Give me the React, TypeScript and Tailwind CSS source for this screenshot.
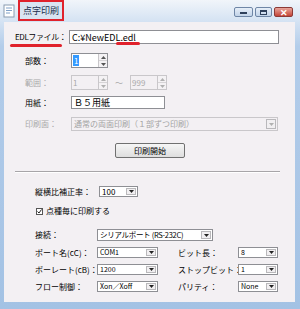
import React from 'react';

function Arrow({ up, color = '#000' }: { up?: boolean; color?: string }) {
  return (
    <svg width="5" height="3" viewBox="0 0 5 3">
      <polygon points={up ? '0,3 5,3 2.5,0' : '0,0 5,0 2.5,3'} fill={color} />
    </svg>
  );
}

function Spin({ value, w, disabled, selected }: { value: string; w: string; disabled?: boolean; selected?: boolean }) {
  return (
    <div className={`${w} h-[15px] flex border ${disabled ? 'border-[#c9c7ca] bg-[#f3f0f3]' : 'border-[#8e8f94] bg-white'}`}>
      <div className={`flex-1 flex items-center pl-[1px] ${disabled ? 'text-[#a9a9a9]' : ''}`}>
        {selected ? <span className="bg-[#3399ff] text-white px-[1px] leading-[11px]">{value}</span> : value}
      </div>
      <div className="w-[9px] flex flex-col border-l border-[#c9c7ca]">
        <div className="flex-1 flex items-center justify-center bg-[#f4f2f4] border-b border-[#d6d4d6]">
          <Arrow up color={disabled ? '#b0b0b0' : '#555'} />
        </div>
        <div className="flex-1 flex items-center justify-center bg-[#f4f2f4]">
          <Arrow color={disabled ? '#b0b0b0' : '#555'} />
        </div>
      </div>
    </div>
  );
}

function Combo({ text, w, h, disabled, small }: { text: string; w: string; h: string; disabled?: boolean; small?: boolean }) {
  return (
    <div className={`${w} ${h} flex border ${disabled ? 'border-[#c9c7ca] bg-[#f3f0f3]' : 'border-[#8e8f94] bg-white'}`}>
      <div className={`flex-1 min-w-0 flex items-center pl-[2px] whitespace-nowrap overflow-hidden ${small ? 'text-[7px]' : ''} ${disabled ? 'text-[#a3a3a3]' : ''}`}>
        {text}
      </div>
      <div className="w-[10px] shrink-0 m-[1px] flex items-center justify-center border border-[#b9b8bb] bg-[#f1eff1]">
        <Arrow color={disabled ? '#b0b0b0' : '#222'} />
      </div>
    </div>
  );
}

function Label({ children, w, disabled }: { children: React.ReactNode; w: string; disabled?: boolean }) {
  return <div className={`${w} shrink-0 whitespace-nowrap ${disabled ? 'text-[#a9a9a9]' : ''}`}>{children}</div>;
}

export default function App() {
  return (
    <div className="w-[300px] h-[309px] flex flex-col bg-linear-to-b from-[#f1f5fa] via-[#b3cdea] via-15% to-[#a3c2e4] font-['Noto_Sans_CJK_JP','Noto_Sans',sans-serif] text-[8px] text-black leading-none">
      {/* title bar */}
      <div className="h-[22px] flex items-start shrink-0">
        <svg className="mt-[4px] ml-[2px]" width="14" height="14" viewBox="0 0 14 14">
          <rect x="2" y="1" width="10" height="12" fill="#fff" stroke="#8a9bb0" />
          <line x1="4" y1="4" x2="10" y2="4" stroke="#7fa0c8" />
          <line x1="4" y1="6.5" x2="10" y2="6.5" stroke="#7fa0c8" />
          <line x1="4" y1="9" x2="8" y2="9" stroke="#7fa0c8" />
        </svg>
        <div className="ml-[2px] w-[46px] h-[21px] border-[2px] border-[#e0222c] bg-[#d9e4f1] flex items-center justify-center text-[9px] text-[#1b2f4d]">
          点字印刷
        </div>
        <div className="flex-1" />
        <div className="mt-[7px] mr-[7px] flex gap-[2px]">
          <div className="w-[19px] h-[10px] rounded-[2px] border border-[#6f86a6] bg-linear-to-b from-[#e6eef8] to-[#c2d3e8] flex items-end justify-center pb-[2px]">
            <div className="w-[7px] h-[2px] bg-[#2d3f5a]" />
          </div>
          <div className="w-[17px] h-[10px] rounded-[2px] border border-[#6f86a6] bg-linear-to-b from-[#e6eef8] to-[#c2d3e8] flex items-center justify-center">
            <div className="w-[7px] h-[5px] border border-[#2d3f5a] border-t-2" />
          </div>
          <div className="w-[19px] h-[10px] rounded-[2px] border border-[#8c3a36] bg-linear-to-b from-[#e8a59c] to-[#c24237] flex items-center justify-center text-white text-[9px] font-bold">
            ✕
          </div>
        </div>
      </div>

      {/* client area */}
      <div className="flex-1 ml-[4px] mr-[5px] mb-[7px] bg-[#f3f0f3] flex flex-col">
        {/* EDL file */}
        <div className="mt-[8px] ml-[11px] flex items-center h-[14px]">
          <div className="relative w-[54px] shrink-0 whitespace-nowrap tracking-[-0.4px]">
            EDLファイル：
            <div className="absolute left-[-5px] top-[11px] w-[52px] h-[3px] rounded-full bg-[#e0222c]" />
          </div>
          <div className="relative w-[210px] h-[14px] border border-[#8e8f94] bg-white flex items-center pl-[2px] text-[9px]">
            C:¥NewEDL.edl
            <div className="absolute left-[46px] top-[11px] w-[24px] h-[3px] rounded-full bg-[#e0222c]" />
          </div>
        </div>

        {/* copies */}
        <div className="mt-[9px] ml-[21px] flex items-center">
          <Label w="w-[46px]">部数：</Label>
          <Spin value="1" w="w-[37px]" selected />
        </div>

        {/* range */}
        <div className="mt-[7px] ml-[21px] flex items-center">
          <Label w="w-[46px]" disabled>範囲：</Label>
          <Spin value="1" w="w-[37px]" disabled />
          <div className="w-[22px] text-center text-[#a9a9a9]">～</div>
          <Spin value="999" w="w-[37px]" disabled />
        </div>

        {/* paper */}
        <div className="mt-[6px] ml-[21px] flex items-center">
          <Label w="w-[46px]">用紙：</Label>
          <div className="w-[94px] h-[13px] border border-[#8e8f94] bg-white flex items-center pl-[2px] text-[9px]">Ｂ５用紙</div>
        </div>

        {/* print side */}
        <div className="mt-[8px] ml-[21px] flex items-center">
          <Label w="w-[46px]" disabled>印刷面：</Label>
          <Combo text="通常の両面印刷（１部ずつ印刷）" w="w-[207px]" h="h-[14px]" disabled />
        </div>

        {/* start button */}
        <div className="mt-[12px] ml-[111px] w-[70px] h-[15px] border border-[#707070] rounded-[2px] bg-linear-to-b from-[#f6f6f6] to-[#dedede] flex items-center justify-center">
          印刷開始
        </div>

        {/* separator */}
        <div className="mt-[13px] ml-[11px] w-[265px] border-t border-[#a7a5a8] border-b border-b-white" />

        {/* aspect correction */}
        <div className="mt-[13px] ml-[31px] flex items-center">
          <Label w="w-[64px]">縦横比補正率：</Label>
          <Combo text="100" w="w-[39px]" h="h-[11px]" />
        </div>

        {/* checkbox */}
        <div className="mt-[9px] ml-[32px] flex items-center gap-[3px] h-[10px]">
          <div className="w-[7px] h-[7px] border border-[#555] bg-white flex items-center justify-center">
            <svg width="5" height="5" viewBox="0 0 5 5">
              <polyline points="0.5,2.5 2,4 4.5,0.5" fill="none" stroke="#222" strokeWidth="1" />
            </svg>
          </div>
          <span>点種毎に印刷する</span>
        </div>

        {/* connection */}
        <div className="mt-[13px] ml-[31px] flex items-center">
          <Label w="w-[62px]">接続：</Label>
          <div className="w-[116px] h-[12px] flex border border-[#8e8f94] bg-white">
            <div className="flex-1 min-w-0 flex items-center pl-[2px] whitespace-nowrap overflow-hidden text-[7.5px] tracking-[-0.3px]">
              シリアルポート (RS-232C)
            </div>
            <div className="w-[10px] shrink-0 m-[1px] flex items-center justify-center border border-[#b9b8bb] bg-[#f1eff1]">
              <Arrow color="#222" />
            </div>
          </div>
        </div>

        {[
          ['ポート名(cC)：', 'COM1', 'ビット長：', '8'],
          ['ボーレート(cB)：', '1200', 'ストップビット：', '1'],
          ['フロー制御：', 'Xon／Xoff', 'パリティ：', 'None'],
        ].map(([l1, v1, l2, v2]) => (
          <div key={l1} className="mt-[6px] ml-[31px] flex items-center">
            <Label w="w-[62px]">{l1}</Label>
            <Combo text={v1} w="w-[61px]" h="h-[11px]" small />
            <div className="w-[20px]" />
            <Label w="w-[60px]">{l2}</Label>
            <Combo text={v2} w="w-[40px]" h="h-[11px]" small />
          </div>
        ))}
      </div>
    </div>
  );
}
